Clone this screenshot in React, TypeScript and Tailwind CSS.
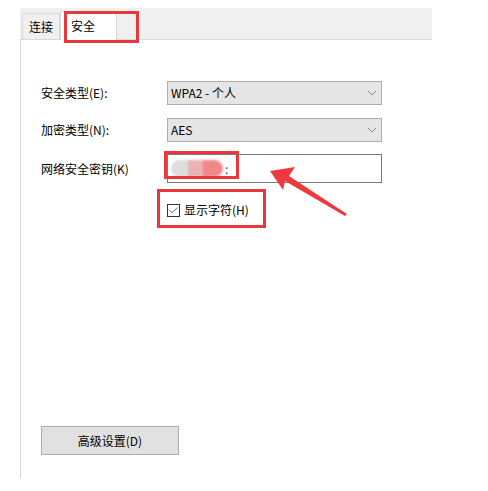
import { Check } from 'lucide-react';

const font = { fontFamily: '"Noto Sans CJK SC", "Liberation Sans", sans-serif' };

function Chevron() {
  return (
    <svg width="10" height="6" viewBox="0 0 10 6" className="text-[#8a8a8a]">
      <path d="M1 1 L5 5 L9 1" fill="none" stroke="currentColor" strokeWidth="1" />
    </svg>
  );
}

function Select({ value }: { value: string }) {
  return (
    <div className="w-[215px] h-[24px] bg-[#e5e5e5] border border-[#adadad] flex items-center justify-between pl-[3px] pr-[4px] text-[12px] text-black">
      <span>{value}</span>
      <Chevron />
    </div>
  );
}

function Row({ label, children }: { label: string; children: React.ReactNode }) {
  return (
    <div className="flex items-center">
      <div className="w-[126px] text-[12px] text-black">{label}</div>
      {children}
    </div>
  );
}

export default function App() {
  return (
    <div className="relative w-[488px] h-[491px] bg-white overflow-hidden" style={font}>
      <div className="ml-[20px] mt-[8px] w-[412px] h-[32px] bg-[#f0f0f0] border-b border-[#d9d9d9] flex items-end pl-[2px]">
        <div className="h-[26px] px-[6px] flex items-center border border-b-0 border-[#d9d9d9] bg-[#f0f0f0] text-[12px] text-black">
          连接
        </div>
        <div className="h-[29px] w-[57px] pl-[10px] flex items-center border border-b-0 border-[#d9d9d9] bg-white text-[12px] text-black -mb-px">
          安全
        </div>
      </div>

      <div className="ml-[20px] w-[412px] h-[438px] border-l border-[#d9d9d9] bg-white pl-[20px] pt-[41px] flex flex-col">
        <Row label="安全类型(E):">
          <Select value="WPA2 - 个人" />
        </Row>
        <div className="mt-[13px]">
          <Row label="加密类型(N):">
            <Select value="AES" />
          </Row>
        </div>
        <div className="mt-[12px]">
          <Row label="网络安全密钥(K)">
            <div className="w-[215px] h-[29px] bg-white border border-[#7a7a7a] flex items-center pl-[3px]">
              <div className="flex h-[17px] rounded-full overflow-hidden blur-[1px]">
                <div className="w-[17px] bg-[#dedede]" />
                <div className="w-[15px] bg-[#ebb3b6]" />
                <div className="w-[20px] bg-[#f0878b]" />
              </div>
              <span className="text-[12px] ml-[2px] text-[#444]">:</span>
            </div>
          </Row>
        </div>
        <div className="mt-[18px] ml-[126px] flex items-center gap-[4px] text-[12px] text-black">
          <div className="w-[13px] h-[13px] border border-[#333] bg-white flex items-center justify-center">
            <Check size={11} strokeWidth={1.5} className="text-[#222]" />
          </div>
          <span>显示字符(H)</span>
        </div>

        <div className="mt-auto mb-[23px] w-[138px] h-[29px] bg-[#e1e1e1] border border-[#adadad] flex items-center justify-center text-[12px] text-black">
          高级设置(D)
        </div>
      </div>

      <div className="absolute left-[64px] top-[11px] w-[75px] h-[32px] border-[3px] border-[#e8383d]" />
      <div className="absolute left-[164px] top-[151px] w-[75px] h-[28px] border-[3px] border-[#e8383d]" />
      <div className="absolute left-[157px] top-[189px] w-[109px] h-[39px] border-[3px] border-[#e8383d]" />

      <svg className="absolute left-0 top-0" width="488" height="491" viewBox="0 0 488 491">
        <polygon points="270,171 295,167 289,176 347,214 345,216 285,181 283,190" fill="#ee3a3f" />
      </svg>
    </div>
  );
}
